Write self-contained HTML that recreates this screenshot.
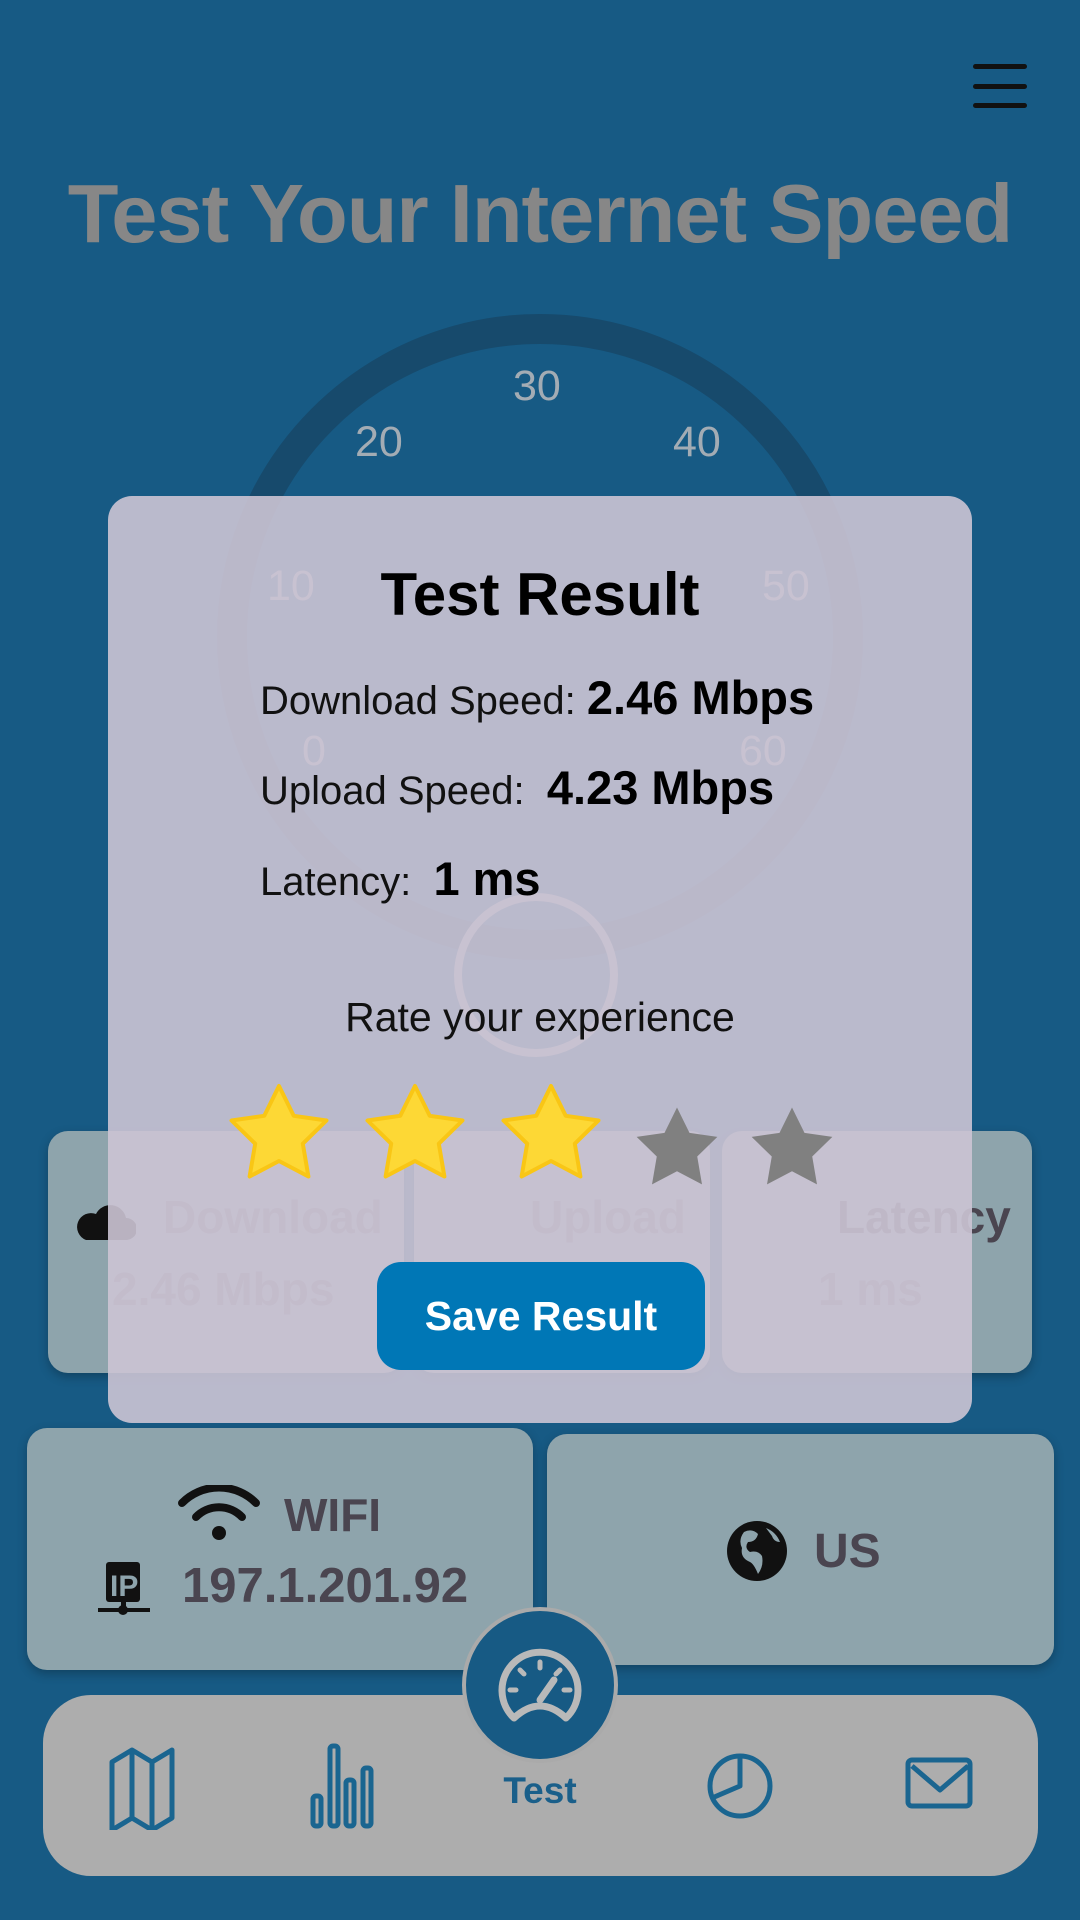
<!DOCTYPE html>
<html><head><meta charset="utf-8"><style>
*{margin:0;padding:0;box-sizing:border-box}
body{width:1080px;height:1920px;background:#175a84;font-family:"Liberation Sans",Arial,sans-serif;position:relative;overflow:hidden}
.abs{position:absolute}
.t{position:absolute;white-space:nowrap}
.card{position:absolute;background:#8ea4ac;border-radius:20px;box-shadow:0 4px 10px rgba(0,0,0,.25)}
.lbl{color:#a3acb4;font-size:43px}
</style></head><body>
<div class="abs" style="left:973px;top:64px;width:54px;height:5px;background:#111;border-radius:3px"></div>
<div class="abs" style="left:973px;top:84px;width:54px;height:5px;background:#111;border-radius:3px"></div>
<div class="abs" style="left:973px;top:103px;width:54px;height:5px;background:#111;border-radius:3px"></div>
<div class="t" style="left:0;width:1080px;text-align:center;top:166px;font-size:83px;font-weight:bold;color:#878787;letter-spacing:-1px">Test Your Internet Speed</div>
<svg class="abs" style="left:0;top:0" width="1080" height="1100">
<circle cx="540" cy="637" r="308" fill="none" stroke="#174a6c" stroke-width="30"/>
<circle cx="536" cy="975" r="78" fill="none" stroke="#a3acb4" stroke-width="8"/>
</svg>
<div class="t lbl" style="left:513px;top:362px">30</div>
<div class="t lbl" style="left:355px;top:418px">20</div>
<div class="t lbl" style="left:673px;top:418px">40</div>
<div class="t lbl" style="left:267px;top:562px">10</div>
<div class="t lbl" style="left:762px;top:562px">50</div>
<div class="t lbl" style="left:302px;top:727px">0</div>
<div class="t lbl" style="left:739px;top:727px">60</div>
<div class="card" style="left:48px;top:1131px;width:356px;height:242px"></div>
<div class="card" style="left:414px;top:1131px;width:296px;height:242px"></div>
<div class="card" style="left:722px;top:1131px;width:310px;height:242px"></div>
<div class="t" style="left:163px;top:1190px;font-size:46px;font-weight:bold;color:#6e6e78">Download</div>
<div class="t" style="left:112px;top:1262px;font-size:46px;font-weight:bold;color:#6e6e78">2.46 Mbps</div>
<div class="t" style="left:530px;top:1190px;font-size:46px;font-weight:bold;color:#6e6e78">Upload</div>
<div class="t" style="left:837px;top:1190px;font-size:46px;font-weight:bold;color:#4a4550">Latency</div>
<div class="t" style="left:818px;top:1262px;font-size:46px;font-weight:bold;color:#6e6e78">1 ms</div>
<svg class="abs" style="left:76px;top:1195px" width="60" height="50"><path d="M10 45 h40 a10 10 0 0 0 0-22 a16 16 0 0 0-30-4 a12 12 0 0 0-10 26z" fill="#111"/></svg>
<!-- dialog -->
<div class="abs" style="left:108px;top:496px;width:864px;height:927px;background:rgba(204,196,212,.9);border-radius:24px"></div>
<div class="t" style="left:0;width:1080px;text-align:center;top:560px;font-size:60px;font-weight:bold;color:#000">Test Result</div>
<div class="t" style="left:260px;top:670px;font-size:40px;color:#111">Download Speed: <b style="font-size:47px;color:#000">2.46 Mbps</b></div>
<div class="t" style="left:260px;top:760px;font-size:40px;color:#111">Upload Speed:&nbsp; <b style="font-size:47px;color:#000">4.23 Mbps</b></div>
<div class="t" style="left:260px;top:851px;font-size:40px;color:#111">Latency:&nbsp; <b style="font-size:47px;color:#000">1 ms</b></div>
<div class="t" style="left:0;width:1080px;text-align:center;top:994px;font-size:41px;color:#111">Rate your experience</div>
<svg class="abs" style="left:0;top:1070px" width="1080" height="140">
<defs><path id="s" d="M0,-50 L14.7,-20.2 L47.5,-15.5 L23.8,7.7 L29.4,40.5 L0,25 L-29.4,40.5 L-23.8,7.7 L-47.5,-15.5 L-14.7,-20.2Z"/></defs>
<g fill="#fdd835" stroke="#f9c615" stroke-width="4" stroke-linejoin="round">
<use href="#s" transform="translate(279,66)"/><use href="#s" transform="translate(415,66)"/><use href="#s" transform="translate(551,66)"/></g>
<g fill="#808080"><use href="#s" transform="translate(677,80) scale(.85)"/><use href="#s" transform="translate(792,80) scale(.85)"/></g>
</svg>
<div class="abs" style="left:377px;top:1262px;width:328px;height:108px;background:#0077b6;border-radius:24px;color:#fff;font-size:41px;font-weight:bold;text-align:center;line-height:108px">Save Result</div>
<!-- info cards -->
<div class="card" style="left:27px;top:1428px;width:506px;height:242px"></div>
<div class="card" style="left:547px;top:1434px;width:507px;height:231px"></div>
<svg class="abs" style="left:178px;top:1485px" width="82" height="56"><path d="M4 18 a52 52 0 0 1 74 0" fill="none" stroke="#111" stroke-width="8" stroke-linecap="round"/><path d="M18 32 a32 32 0 0 1 46 0" fill="none" stroke="#111" stroke-width="8" stroke-linecap="round"/><circle cx="41" cy="48" r="7" fill="#111"/></svg>
<div class="t" style="left:284px;top:1488px;font-size:46px;font-weight:bold;color:#4a4550">WIFI</div>
<svg class="abs" style="left:96px;top:1560px" width="56" height="58"><rect x="10" y="2" width="34" height="40" rx="3" fill="#111"/><text x="14" y="36" font-size="30" font-weight="bold" fill="#8ea4ac" font-family="Liberation Sans">IP</text><rect x="25" y="42" width="5" height="8" fill="#111"/><rect x="2" y="48" width="52" height="4" fill="#111"/><circle cx="27" cy="50" r="5" fill="#111"/></svg>
<div class="t" style="left:182px;top:1558px;font-size:49px;font-weight:bold;color:#4a4550">197.1.201.92</div>
<svg class="abs" style="left:726px;top:1520px" width="62" height="62"><circle cx="31" cy="31" r="30" fill="#111"/><path d="M18 12 q8 -4 14 2 q-2 8 -10 8 q-4 6 2 10 q8 -2 12 4 q2 10 -4 18 q-4 -10 -8 -12 q-10 -4 -8 -14 q-4 -8 2 -16z M40 8 q10 4 14 14 q-6 0 -8 -6z" fill="#8ea4ac"/></svg>
<div class="t" style="left:814px;top:1524px;font-size:48px;font-weight:bold;color:#4a4550">US</div>
<!-- nav -->
<div class="abs" style="left:43px;top:1695px;width:995px;height:181px;background:#adadad;border-radius:48px"></div>
<div class="abs" style="left:462px;top:1607px;width:156px;height:156px;border-radius:50%;background:#175a84;border:4px solid #aaa"></div>
<svg class="abs" style="left:496px;top:1648px" width="88" height="80"><path d="M18 70 a38 38 0 1 1 52 0 q-26 -24 -52 0z" fill="none" stroke="#b9b9b9" stroke-width="7" stroke-linejoin="round"/><path d="M44 52 L58 32" stroke="#b9b9b9" stroke-width="7" stroke-linecap="round"/><g stroke="#b9b9b9" stroke-width="5" stroke-linecap="round"><path d="M44 14v6M24 22l4 4M64 22l-4 4M14 42h6M68 42h6"/></g></svg>
<div class="t" style="left:0;width:1080px;text-align:center;top:1770px;font-size:37px;font-weight:bold;color:#1a5f8a">Test</div>
<svg class="abs" style="left:0;top:1740px" width="1080" height="90" fill="none" stroke="#1a6590" stroke-width="5" stroke-linejoin="round">
<path d="M112 22 l20 -12 l20 12 l20 -12 v68 l-20 12 l-20 -12 l-20 12z M132 10 v68 M152 22 v68"/>
<rect x="313" y="56" width="8" height="30" rx="3"/><rect x="330" y="6" width="8" height="80" rx="3"/><rect x="346" y="40" width="8" height="46" rx="3"/><rect x="363" y="28" width="8" height="58" rx="3"/>
<circle cx="740" cy="46" r="30"/><path d="M740 16 v30 l-28 12"/>
<rect x="908" y="20" width="62" height="46" rx="4"/><path d="M912 26 l28 24 l28 -24"/>
</svg>
</body></html>
